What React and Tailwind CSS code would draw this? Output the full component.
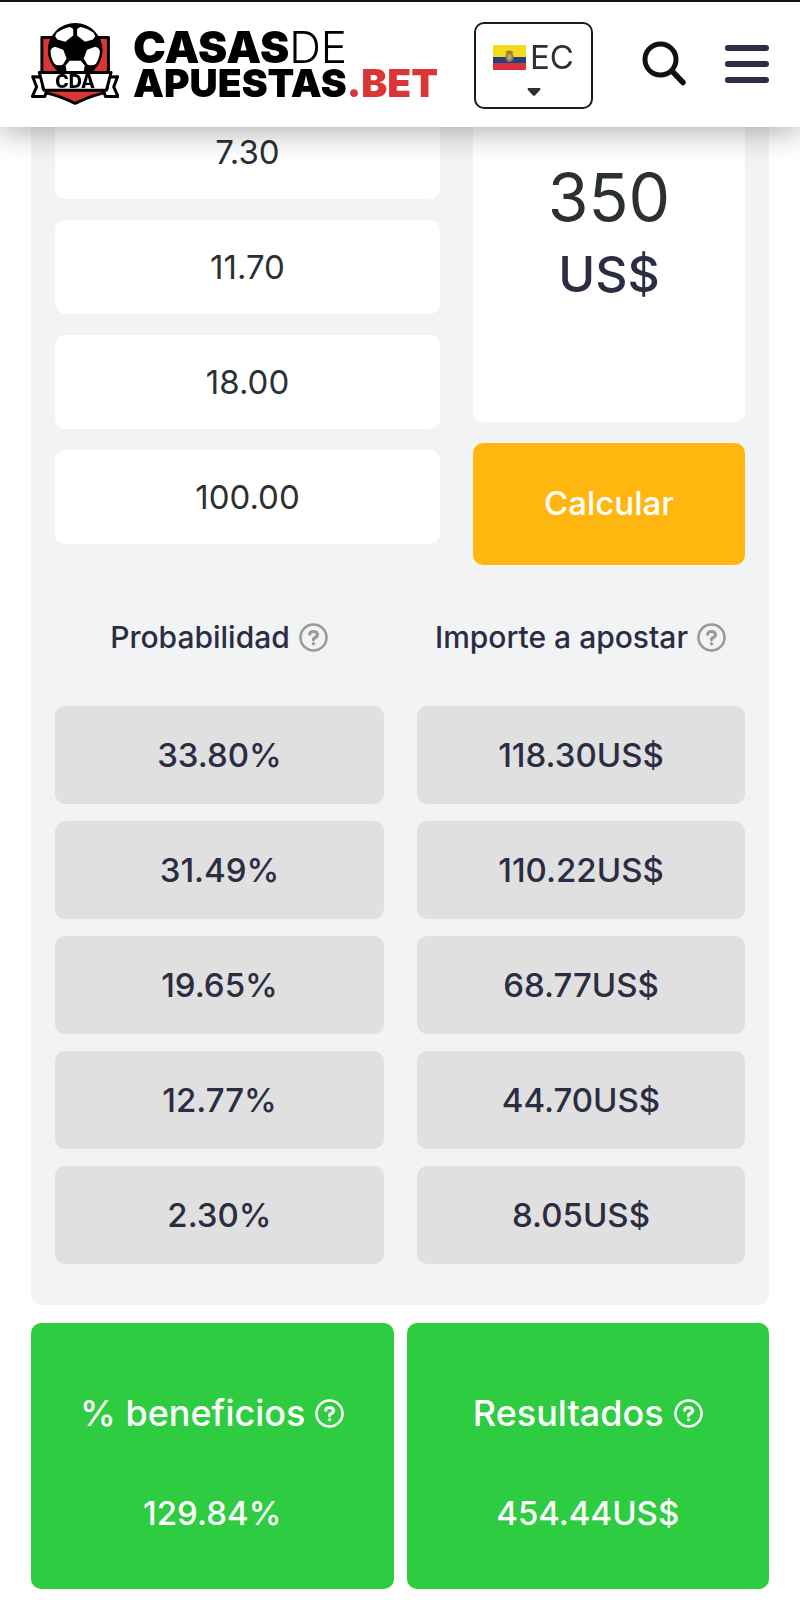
import React from "react";

const odds = ["7.30", "11.70", "18.00", "100.00"];

const stakes = [
  ["33.80%", "118.30US$"],
  ["31.49%", "110.22US$"],
  ["19.65%", "68.77US$"],
  ["12.77%", "44.70US$"],
  ["2.30%", "8.05US$"],
];

function Emblem() {
  return (
    <svg viewBox="33 33 267 252" className="h-[83px] w-[88px] shrink-0" aria-hidden="true">
      <path d="M66 80H268V246Q226 252 167 280Q108 252 66 246Z" fill="#dc3535" stroke="#000" strokeWidth="9" strokeLinejoin="round" />
      <circle cx="167" cy="119" r="83" fill="#000" />
      <g fill="#fff">
        <path d="M111 66Q131 51 152 48L161 54V74L137 93L113 86L106 76Z" />
        <path d="M223 66Q203 51 182 48L173 54V74L197 93L221 86L228 76Z" />
        <path d="M97 112L106 108L131 117L141 144L130 162Q114 168 104 160Q92 140 92 120Z" />
        <path d="M237 112L228 108L203 117L193 144L204 162Q220 168 230 160Q242 140 242 120Z" />
        <path d="M150 151H184L196 165L193 184H141L138 165Z" />
      </g>
      <g fill="#fff" stroke="#000" strokeWidth="9" strokeLinejoin="round">
        <path d="M66 200L38 199L50 230L37 259H75L81 240L70 236Z" />
        <path d="M268 200L296 199L284 230L297 259H259L253 240L264 236Z" />
        <path d="M58 186H276L262 240H72Z" />
      </g>
      <text x="167" y="232" textAnchor="middle" fontFamily="Inter, sans-serif" fontWeight="800" fontSize="55" fill="#000">CDA</text>
    </svg>
  );
}

function Flag() {
  return (
    <svg viewBox="0 0 33 25" className="h-[25px] w-[33px]" aria-hidden="true">
      <rect width="33" height="25" rx="1" fill="#f6dc1c" />
      <rect y="12" width="33" height="7" fill="#24407f" />
      <path d="M0 18H33V24Q33 25 32 25H1Q0 25 0 24Z" fill="#d8303f" />
      <ellipse cx="16.500" cy="12" rx="4" ry="5" fill="#8d8248" />
      <ellipse cx="16.500" cy="12" rx="2" ry="3" fill="#c0a86a" />
      <path d="M12 7Q16 4 21 7L17 9Z" fill="#a07a2a" />
    </svg>
  );
}

function Help({ label, className }) {
  return (
    <button type="button" aria-label={label} className={className}>
      <svg viewBox="0 0 30 30" className="size-[29px]" fill="none" stroke="currentColor" strokeLinecap="round" strokeLinejoin="round">
        <circle cx="15" cy="15" r="13.500" strokeWidth="2.600" />
        <path d="M11 11.500Q11.500 8.800 15 8.800T19.200 12Q19.200 14 17 15T15 17.400" strokeWidth="3.200" />
        <circle cx="15" cy="21.500" r="1.300" fill="currentColor" strokeWidth="1" />
      </svg>
    </button>
  );
}

function Header() {
  return (
    <header className="fixed inset-x-0 top-0 z-10 flex h-[127px] items-center border-t-2 border-[#151515] bg-white px-[31px] pt-[2px] shadow-[0_6px_28px_rgba(0,0,0,0.30)]">
      <a href="#" className="flex items-center gap-[14px] pb-[4px]" aria-label="Casas de Apuestas">
        <Emblem />
        <span className="block whitespace-nowrap pt-[2px] font-black text-black">
          <span className="block text-[44px] leading-[36px]">
            CASAS<span className="font-light">DE</span>
          </span>
          <span className="block text-[39px] leading-[35px]">
            APUESTAS<span className="text-[#dc3535]">.BET</span>
          </span>
        </span>
      </a>
      <div className="ml-auto flex items-center">
        <label className="flex h-[87px] w-[119px] flex-col items-center justify-center rounded-[10px] border-2 border-[#1c1c1c] pt-[2px]">
          <span className="flex items-center gap-1">
            <Flag />
            <select aria-label="País" defaultValue="EC" className="h-10 appearance-none bg-transparent text-[33px] leading-10 text-[#2b3033]">
              <option>EC</option>
            </select>
          </span>
          <svg viewBox="0 0 14 8" className="mt-[11px] h-2 w-[14px]" fill="#2b3033" aria-hidden="true">
            <path d="M1 0H13Q14 1 13 2L8 7.500Q7 8 6 7.500L1 2Q0 1 1 0Z" />
          </svg>
        </label>
        <button type="button" aria-label="Buscar" className="-mt-[4px] ml-[48px]">
          <svg viewBox="0 0 46 46" className="size-[46px]" fill="none" stroke="#111" strokeLinecap="round">
            <circle cx="19.500" cy="18.500" r="15.500" strokeWidth="5" />
            <path d="M31 30L42 41.500" strokeWidth="5.500" />
          </svg>
        </button>
        <button type="button" aria-label="Menú" className="-mt-[4px] ml-[38px]">
          <svg viewBox="0 0 44 38" className="h-[38px] w-[44px]" stroke="#2b2d42" strokeWidth="6" strokeLinecap="round">
            <path d="M3 3H41M3 19H41M3 35H41" />
          </svg>
        </button>
      </div>
    </header>
  );
}

function Result({ title, value }) {
  return (
    <section className="flex flex-1 flex-col items-center gap-[50px] rounded-[10px] bg-[#2ecc40] pb-[51px] pt-[65px] font-medium text-white">
      <h2 className="flex items-center gap-[10px] text-[36px] leading-[50px]">
        {title}
        <Help label={title} className="text-white" />
      </h2>
      <p className="text-[33px] leading-[50px]">{value}</p>
    </section>
  );
}

export default function App() {
  return (
    <div className="min-h-screen bg-white font-['Inter',sans-serif] text-[#2b2d42]">
      <Header />
      <main className="px-[31px] pb-[11px]">
        <section className="rounded-b-[10px] bg-[#f1f3f5] px-[24px] pb-[41px] pt-[105px]">
          <form className="flex gap-[33px]" onSubmit={(e) => e.preventDefault()}>
            <div className="flex min-w-0 flex-[385] flex-col gap-[21px]">
              {odds.map((odd, i) => (
                <input
                  key={odd}
                  aria-label={"Cuota " + (i + 2)}
                  defaultValue={odd}
                  className="h-[94px] w-full rounded-[10px] bg-white text-center text-[33px] text-[#2b3033]"
                />
              ))}
            </div>
            <div className="flex min-w-0 flex-[272] flex-col gap-[21px]">
              <div className="flex h-[317px] flex-col items-center rounded-[10px] bg-white pt-[52px]">
                <input id="stake" defaultValue="350" className="h-20 w-full text-center text-[66px] text-[#2b3033]" />
                <label htmlFor="stake" className="text-[50px] font-medium leading-[74px]">US$</label>
              </div>
              <button type="submit" className="h-[122px] rounded-[10px] bg-[#ffb70f] text-[33px] font-medium text-white">
                Calcular
              </button>
            </div>
          </form>
          <table className="w-full table-fixed text-center">
            <thead>
              <tr className="h-[141px] text-[30px]">
                <th className="p-0 pr-[17px] pt-[3px] font-medium">
                  <span className="flex items-center justify-center gap-[9px]">
                    Probabilidad <Help label="Probabilidad" className="text-[#999]" />
                  </span>
                </th>
                <th className="p-0 pl-[16px] pt-[3px] font-medium">
                  <span className="flex items-center justify-center gap-[9px] whitespace-nowrap">
                    Importe a apostar <Help label="Importe a apostar" className="text-[#999]" />
                  </span>
                </th>
              </tr>
            </thead>
            <tbody className="text-[33px] font-medium">
              {stakes.map(([probability, amount]) => (
                <tr key={amount} className="group">
                  <td className="p-0 pb-[17px] pr-[16px] group-last:pb-0">
                    <div className="rounded-[10px] bg-[#e0e0e0] leading-[98px]">{probability}</div>
                  </td>
                  <td className="p-0 pb-[17px] pl-[17px] group-last:pb-0">
                    <div className="rounded-[10px] bg-[#e0e0e0] leading-[98px]">{amount}</div>
                  </td>
                </tr>
              ))}
            </tbody>
          </table>
        </section>
        <div className="mt-[18px] flex gap-[13px]">
          <Result title="% beneficios" value="129.84%" />
          <Result title="Resultados" value="454.44US$" />
        </div>
      </main>
    </div>
  );
}
